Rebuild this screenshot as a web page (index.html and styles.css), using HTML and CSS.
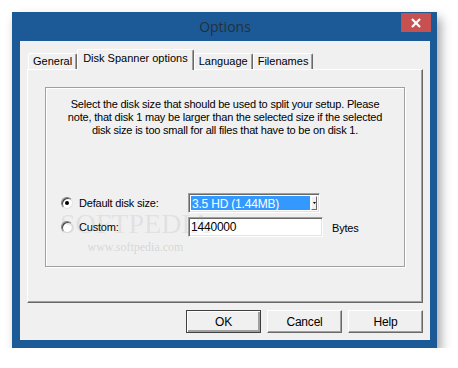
FILE: index.html
```html
<!DOCTYPE html>
<html>
<head>
    <title>Options</title>
    <link rel="stylesheet" href="styles.css">
</head>
<body>
    <div class="window">
        <div class="titlebar">
            <span class="title">Options</span>
            <div class="close">
                <svg width="10" height="10" viewBox="0 0 10 10">
                    <path d="M1 1 L9 9 M9 1 L1 9" stroke="#fff" stroke-width="2.2" fill="none"/>
                </svg>
            </div>
        </div>

        <div class="client">
            <div class="tabs">
                <div class="tab">General</div>
                <div class="tab active">Disk Spanner options</div>
                <div class="tab">Language</div>
                <div class="tab">Filenames</div>
            </div>

            <div class="panel">
                <div class="group">
                    <p class="intro">
                        Select the disk size that should be used to split your setup. Please<br>
                        note, that disk 1 may be larger than the selected size if the selected<br>
                        disk size is too small for all files that have to be on disk 1.
                    </p>

                    <div class="options">
                        <div class="choice">
                            <span class="radio checked"></span>
                            <span>Default disk size:</span>
                        </div>
                        <div class="combo">
                            <span class="combo-value">3.5 HD (1.44MB)</span>
                            <span class="combo-btn">
                                <svg width="3" height="2" viewBox="0 0 3 2"><path d="M0 0 H3 L1.5 2 Z" fill="#000"/></svg>
                            </span>
                        </div>
                        <div></div>

                        <div class="choice">
                            <span class="radio"></span>
                            <span>Custom:</span>
                        </div>
                        <div class="edit">1440000</div>
                        <div class="unit">Bytes</div>
                    </div>

                    <div class="watermark">
                        <span class="wm-big">SOFTPEDIA</span>
                        <span class="wm-small">www.softpedia.com</span>
                    </div>
                </div>
            </div>

            <div class="buttons">
                <div class="btn default">OK</div>
                <div class="btn">Cancel</div>
                <div class="btn">Help</div>
            </div>
        </div>
    </div>
</body>
</html>
```

FILE: styles.css
```css
body {
    margin: 0;
    background-color: #fff;
    font-family: "Liberation Sans", Arial, sans-serif;
    font-size: 11px;
    letter-spacing: -0.2px;
    color: #000;
}

.window {
    margin: 12px 0 0 12px;
    width: 425px;
    height: 336px;
    box-sizing: border-box;
    background-color: #1b5a96;
    padding: 0 7px 8px 8px;
    display: flex;
    flex-direction: column;
    box-shadow: 4px 6px 10px rgba(0, 0, 0, 0.35);
}

.titlebar {
    height: 29px;
    position: relative;
    display: flex;
    align-items: center;
    justify-content: center;
}

.title {
    font-family: "Open Sans", "Noto Sans", sans-serif;
    font-size: 14px;
    letter-spacing: 0;
    color: #26303c;
}

.close {
    position: absolute;
    right: -1px;
    top: 1px;
    width: 30px;
    height: 19px;
    background-color: #c75050;
    display: flex;
    align-items: center;
    justify-content: center;
}

.client {
    flex: 1;
    background-color: #f0f0f0;
    padding: 8px 7px 0 7px;
}

/* tab strip */
.tabs {
    display: flex;
    align-items: flex-end;
    height: 20px;
    padding-left: 1px;
}

.tab {
    height: 16px;
    box-sizing: border-box;
    padding: 0 4px 0 4px;
    line-height: 15px;
    letter-spacing: 0;
    border-top: 1px solid #fff;
    border-left: 1px solid #fff;
    border-right: 1px solid #696969;
    box-shadow: inset -1px 0 #a0a0a0;
    border-radius: 2px 2px 0 0;
}

.tab.active {
    height: 21px;
    margin-bottom: -1px;
    padding: 0 5px 4px 5px;
    line-height: 16px;
    position: relative;
    z-index: 1;
    background-color: #f0f0f0;
}

.panel {
    width: 396px;
    height: 234px;
    box-sizing: border-box;
    border: 1px solid;
    border-color: #fff #696969 #696969 #fff;
    box-shadow: inset -1px -1px #a0a0a0;
    padding: 17px 0 0 17px;
}

.group {
    position: relative;
    width: 360px;
    height: 180px;
    box-sizing: border-box;
    border: 1px solid #a0a0a0;
    box-shadow: 1px 1px 0 #fff, inset 1px 1px 0 #fff;
}

.intro {
    margin: 0;
    padding-top: 10px;
    text-align: center;
    line-height: 13px;
}

.options {
    margin-top: 56px;
    padding-left: 15px;
    display: grid;
    grid-template-columns: 127px auto auto;
    grid-auto-rows: 20px;
    row-gap: 4px;
    justify-content: start;
    justify-items: start;
    align-items: center;
}

.choice {
    display: flex;
    align-items: center;
    gap: 6px;
}

.radio {
    width: 12px;
    height: 12px;
    box-sizing: border-box;
    border-radius: 50%;
    background-color: #fff;
    border: 1px solid;
    border-color: #808080 #e3e3e3 #e3e3e3 #808080;
    box-shadow: inset 1px 1px #404040;
    display: flex;
    align-items: center;
    justify-content: center;
}

.radio.checked::after {
    content: "";
    width: 4px;
    height: 4px;
    border-radius: 50%;
    background-color: #000;
}

.combo,
.edit {
    height: 20px;
    box-sizing: border-box;
    border: 1px solid;
    border-color: #a0a0a0 #fff #fff #a0a0a0;
    box-shadow: inset 1px 1px #696969, inset -1px -1px #e3e3e3;
    background-color: #fff;
}

.combo {
    width: 132px;
    display: flex;
    padding: 2px;
    gap: 1px;
}

.combo-value {
    flex: 1;
    background-color: #3399ff;
    color: #fff;
    font-size: 12px;
    line-height: 16px;
    padding-left: 1px;
}

.combo-btn {
    width: 6px;
    background-color: #f0f0f0;
    border: 1px solid;
    border-color: #fff #696969 #696969 #fff;
    box-sizing: border-box;
    display: flex;
    align-items: center;
    justify-content: center;
}

.edit {
    width: 135px;
    padding: 0 2px;
    font-size: 12px;
    line-height: 18px;
}

.unit {
    margin-left: 9px;
    padding-top: 2px;
}

.watermark {
    position: absolute;
    left: 14px;
    top: 122px;
    display: flex;
    flex-direction: column;
    align-items: center;
    pointer-events: none;
}

.wm-big {
    font-family: "Liberation Serif", serif;
    font-size: 28px;
    line-height: 28px;
    letter-spacing: 0;
    color: rgba(150, 150, 150, 0.18);
}

.wm-small {
    font-family: "Liberation Serif", serif;
    font-size: 12px;
    letter-spacing: 0;
    color: rgba(150, 150, 150, 0.3);
    margin-top: 2px;
}

/* dialog buttons */
.buttons {
    display: flex;
    justify-content: flex-end;
    gap: 6px;
    margin-top: 7px;
}

.btn {
    width: 75px;
    height: 23px;
    box-sizing: border-box;
    border: 1px solid;
    border-color: #fff #696969 #696969 #fff;
    box-shadow: inset -1px -1px #a0a0a0;
    display: flex;
    align-items: center;
    justify-content: center;
    font-size: 12px;
}

.btn.default {
    border-color: #404040;
    box-shadow: inset 1px 1px #fff, inset -2px -2px #a0a0a0;
}
```
